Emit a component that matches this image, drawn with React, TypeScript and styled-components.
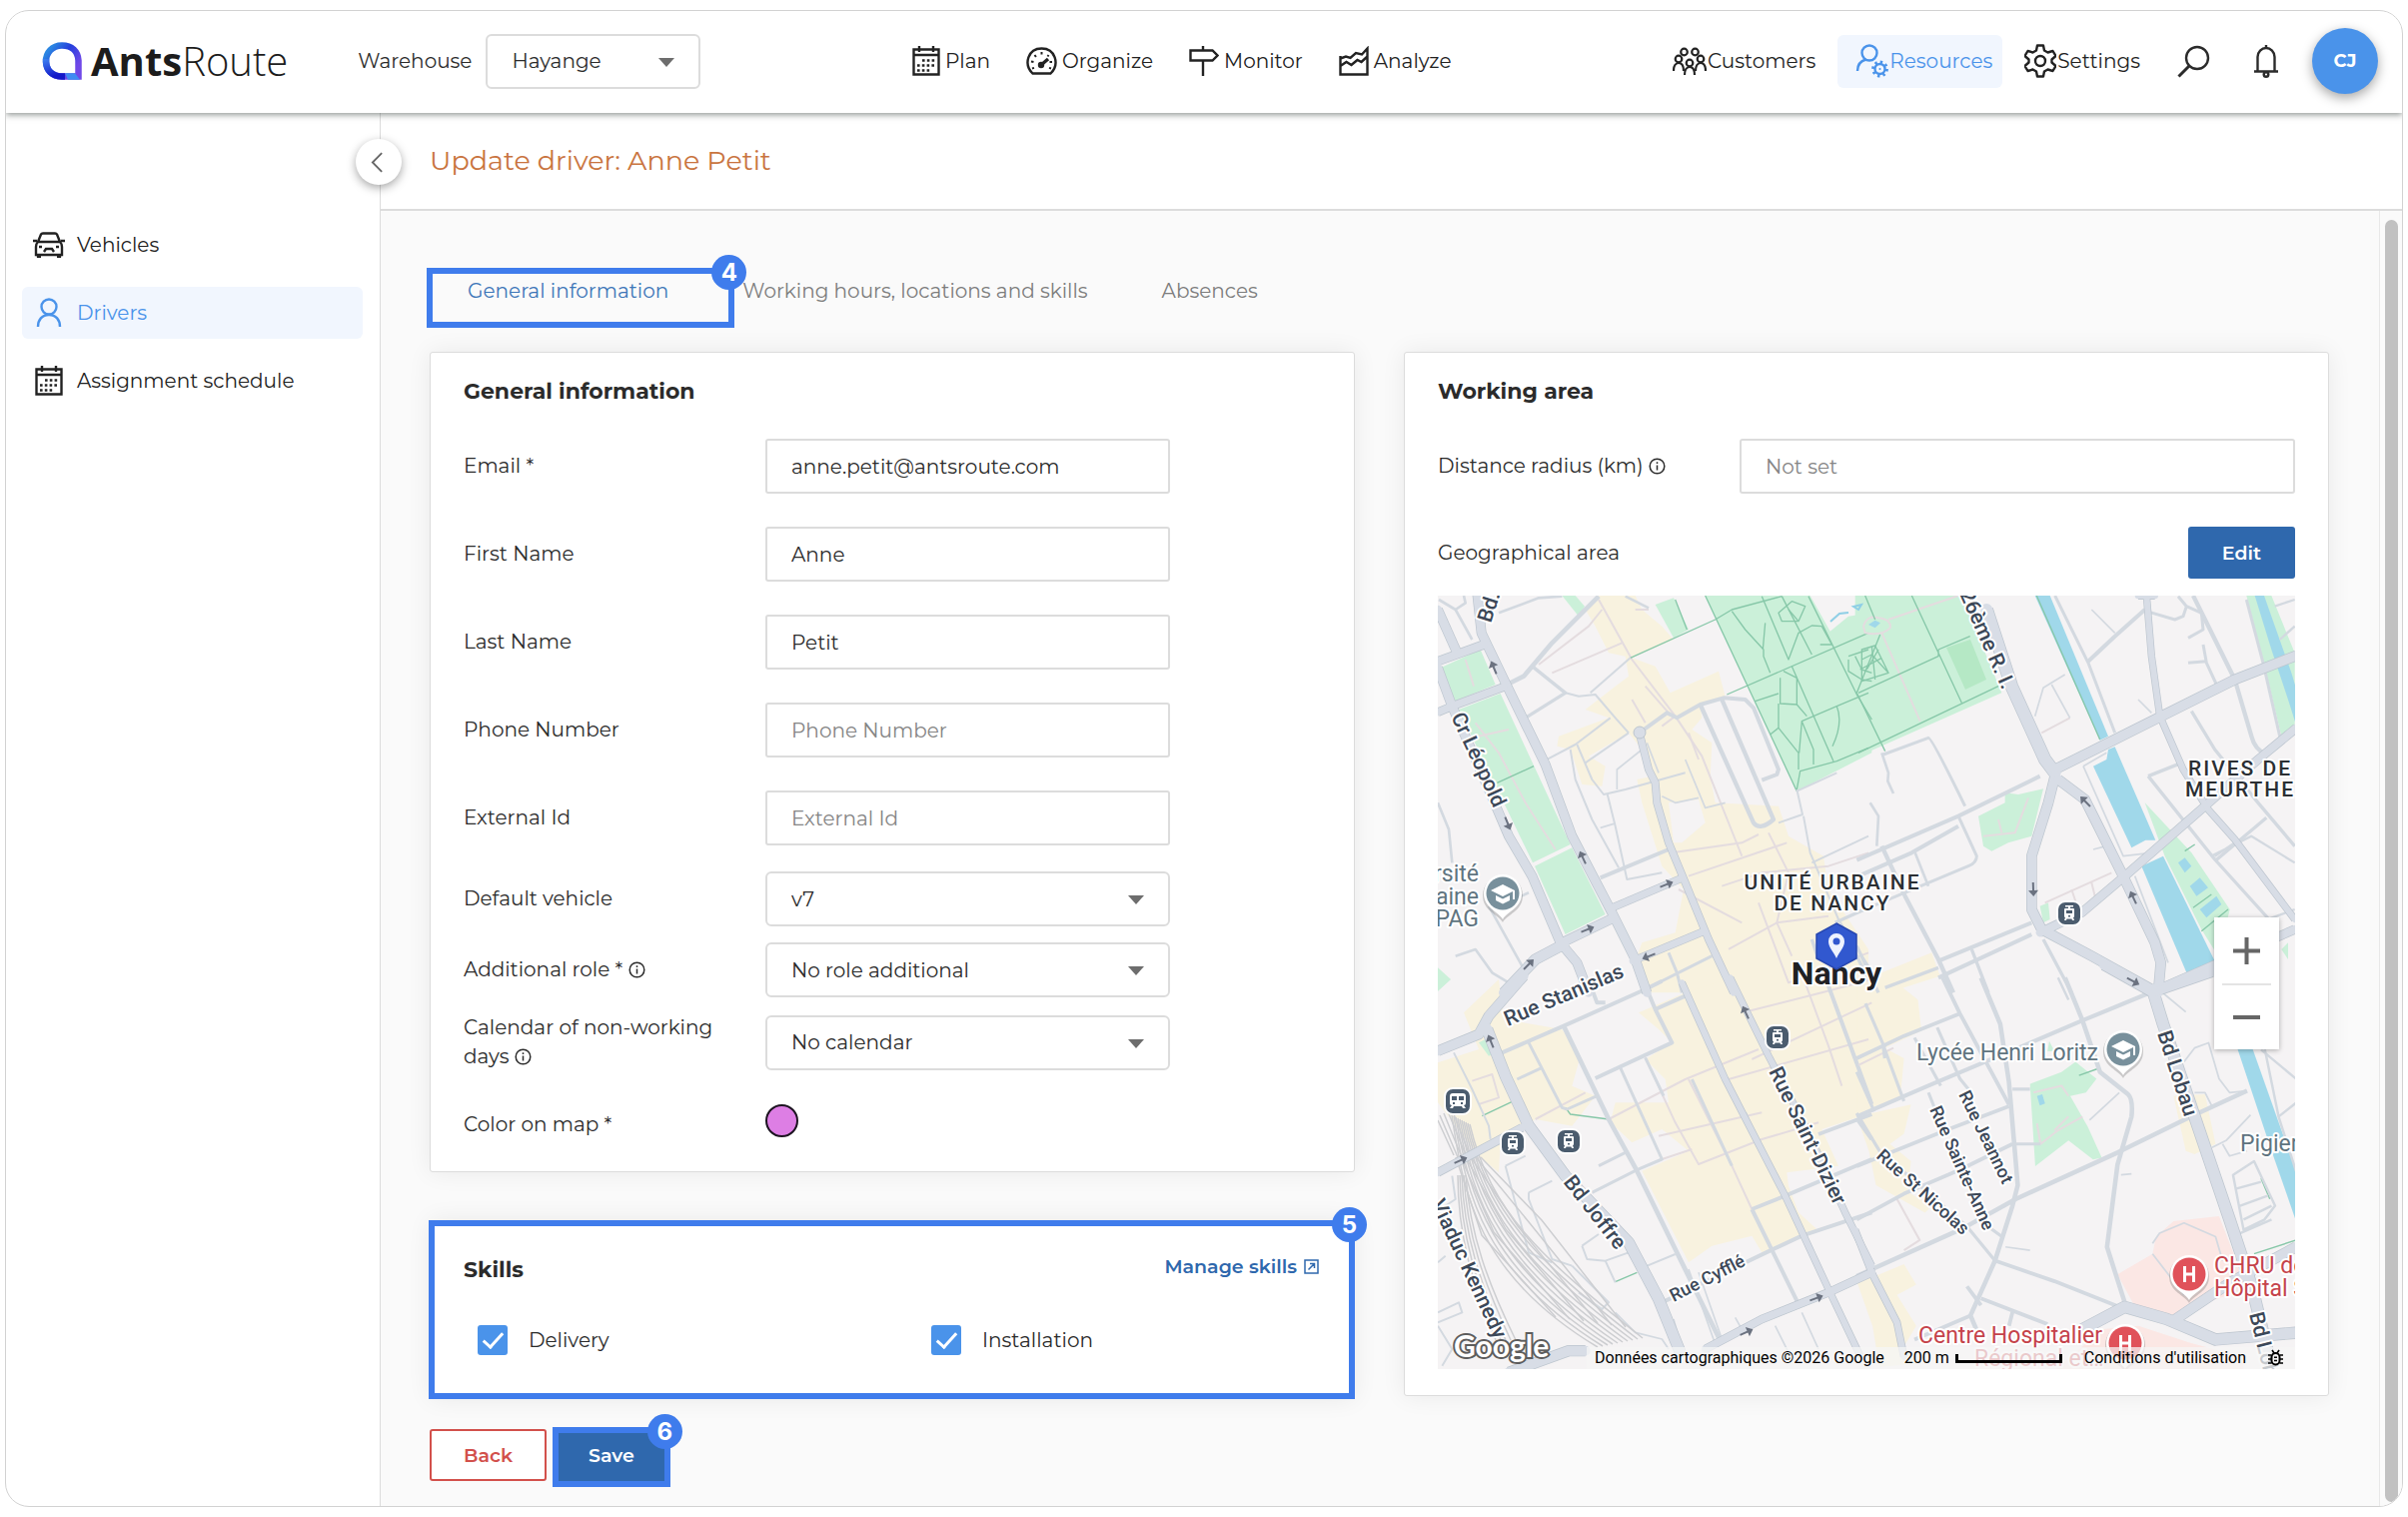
import React from "react";
import styled, { createGlobalStyle, css } from "styled-components";

const font = `Montserrat, Inter, "Open Sans", sans-serif`;
const mapFont = `Roboto, "Noto Sans", sans-serif`;
const c = {
  text: "#2b2b2b",
  muted: "#7d7d7d",
  line: "#dcdcdc",
  blue: "#2f68ad",
  sky: "#4a93ea",
  mark: "#3f7cec",
  red: "#d2504b",
};

const Global = createGlobalStyle`
  *, *::before, *::after { box-sizing: border-box; }
  body { margin: 0; background: #fff; color: ${c.text}; font-family: ${font}; font-size: 20px; line-height: 29px; }
  button, input, select { font-family: inherit; font-size: inherit; color: inherit; }
`;

/* ---------- shell ---------- */
const Page = styled.div`
  min-height: 100vh;
  padding: 10px 5px;
  display: flex;
`;
const Frame = styled.div`
  flex: 1;
  display: flex;
  flex-direction: column;
  border: 1px solid #d2d2d2;
  border-radius: 24px;
  overflow: hidden;
`;
const Header = styled.header`
  position: relative;
  z-index: 2;
  height: 102px;
  padding: 0 24px 2px 36px;
  display: flex;
  align-items: center;
  justify-content: space-between;
  background: #fff;
  box-shadow: 0 2px 6px rgba(40, 50, 45, 0.5);
`;
const Group = styled.div`
  display: flex;
  align-items: center;
`;
const Logo = styled.a`
  display: flex;
  align-items: center;
  gap: 9px;
  margin-right: 70px;
  color: #1c1c1c;
  text-decoration: none;
  font: 300 40px/48px "Open Sans", "Noto Sans", sans-serif;
`;
const LogoBold = styled.strong`
  font-weight: 700;
`;
const HeaderLabel = styled.label`
  margin-right: 14px;
`;
const SelectBox = styled.div<{ $w?: number }>`
  position: relative;
  width: ${(p) => (p.$w ? `${p.$w}px` : "100%")};
  &::after {
    content: "";
    position: absolute;
    right: 26px;
    top: 24px;
    border: 8px solid transparent;
    border-top: 9px solid #6d6d6d;
    border-bottom: 0;
    pointer-events: none;
  }
`;
const boxed = css`
  display: block;
  width: 100%;
  height: 55px;
  padding: 0 24px;
  background: #fff;
  border: 2px solid ${c.line};
  outline: none;
`;
const Select = styled.select`
  ${boxed}
  appearance: none;
  border-radius: 6px;
`;
const Input = styled.input`
  ${boxed}
  border-radius: 3px;
  &::placeholder {
    color: #858585;
    opacity: 1;
  }
`;
const Nav = styled.nav`
  display: flex;
  align-items: center;
  gap: 36px;
`;
const PlanNav = styled(Nav)`
  margin-right: 10px;
`;
const NavLink = styled.a<{ $active?: boolean }>`
  display: flex;
  align-items: center;
  gap: 5px;
  height: 53px;
  color: ${(p) => (p.$active ? c.sky : "#222")};
  text-decoration: none;
  ${(p) =>
    p.$active &&
    css`
      padding: 0 10px 0 18px;
      background: #f1f6fe;
      border-radius: 6px;
    `}
`;
const UserNav = styled(Nav)`
  gap: 22px;
  ${NavLink} {
    gap: 1px;
  }
`;
const IconButton = styled.button`
  display: grid;
  place-items: center;
  width: 36px;
  height: 40px;
  padding: 0;
  margin-left: 14px;
  border: 0;
  background: none;
`;
const Avatar = styled.button`
  width: 66px;
  height: 66px;
  margin-left: 6px;
  border: 0;
  border-radius: 50%;
  background: ${c.sky};
  color: #fff;
  font-size: 18px;
  font-weight: 700;
  box-shadow: 0 4px 12px rgba(0, 0, 0, 0.35);
`;

const Body = styled.div`
  flex: 1;
  display: flex;
`;
const Sidebar = styled.aside`
  position: relative;
  width: 375px;
  padding: 106px 17px 0 16px;
  border-right: 1px solid ${c.line};
`;
const SideNav = styled.nav`
  display: grid;
  gap: 16px;
`;
const SideLink = styled.a<{ $active?: boolean }>`
  display: flex;
  align-items: center;
  gap: 12px;
  height: 52px;
  padding-left: 11px;
  border-radius: 6px;
  color: ${(p) => (p.$active ? c.sky : "#222")};
  background: ${(p) => (p.$active ? "#f1f6fe" : "none")};
  text-decoration: none;
`;
const Collapse = styled.button`
  position: absolute;
  top: 26px;
  right: -22px;
  width: 46px;
  height: 46px;
  padding: 0 3px 0 0;
  display: grid;
  place-items: center;
  border: 0;
  border-radius: 50%;
  background: #fff;
  box-shadow: 0 3px 10px rgba(0, 0, 0, 0.35);
`;
const Main = styled.main`
  flex: 1;
  min-width: 0;
  display: flex;
  flex-direction: column;
`;
const TitleBar = styled.div`
  height: 98px;
  padding-left: 49px;
  display: flex;
  align-items: center;
  border-bottom: 2px solid ${c.line};
`;
const Title = styled.h1`
  margin: 0;
  color: #c9743f;
  font-size: 27px;
  line-height: 36px;
  font-weight: 400;
`;
const Scroller = styled.div`
  flex: 1;
  display: flex;
  background: #fafafa;
`;
const Content = styled.div`
  flex: 1;
  min-width: 0;
  padding: 58px 50px 22px 49px;
`;
const Track = styled.div`
  width: 23px;
  padding: 9px 4px 4px 5px;
  display: flex;
  border-left: 1px solid #e8e8e8;
`;
const Thumb = styled.div`
  flex: 1;
  border-radius: 7px;
  background: #c1c1c1;
`;

/* ---------- numbered highlights ---------- */
const Marked = styled.div`
  position: relative;
`;
const Outline = styled.span<{ $inset: string }>`
  position: absolute;
  inset: ${(p) => p.$inset};
  border: 6px solid ${c.mark};
  pointer-events: none;
`;
const Step = styled.span`
  position: absolute;
  top: -19px;
  right: -18px;
  width: 35px;
  height: 35px;
  display: grid;
  place-items: center;
  border-radius: 50%;
  background: ${c.mark};
  color: #fff;
  font: 700 24px/35px Inter, sans-serif;
`;

/* ---------- tabs, cards, fields ---------- */
const Tabs = styled.div`
  display: flex;
  margin: 0 0 39px 1px;
`;
const Tab = styled.button<{ $active?: boolean }>`
  height: 44px;
  padding: 0 37px;
  border: 0;
  background: none;
  color: ${(p) => (p.$active ? "#3d76b8" : c.muted)};
`;
const Columns = styled.div`
  display: grid;
  grid-template-columns: 1fr 1fr;
  gap: 49px;
  align-items: start;
`;
const Card = styled.section`
  padding: 23px 33px 32px;
  background: #fff;
  border: 1px solid ${c.line};
  border-radius: 3px;
  box-shadow: 0 0 24px rgba(0, 0, 0, 0.07);
`;
const AreaCard = styled(Card)`
  padding-bottom: 26px;
`;
const SkillCard = styled(Card)`
  margin-top: 48px;
  padding: 33px 33px 43px;
`;
const CardTitle = styled.h2`
  margin: 0;
  font-size: 22px;
  line-height: 32px;
  font-weight: 700;
`;
const Fields = styled.div<{ $top: number; $gap: number }>`
  display: grid;
  gap: ${(p) => p.$gap}px;
  margin-top: ${(p) => p.$top}px;
`;
const Row = styled.div<{ $wide?: boolean; $end?: boolean }>`
  display: grid;
  grid-template-columns: 302px ${(p) => (p.$wide ? "1fr" : "minmax(0, 405px)")};
  align-items: ${(p) => (p.$end ? "end" : "center")};
`;
const Label = styled.label`
  padding-right: 50px;
`;
const Swatch = styled.button`
  width: 33px;
  height: 33px;
  margin-bottom: 2px;
  border: 2px solid #1c1320;
  border-radius: 50%;
  background: #dd7ee4;
`;
const Between = styled.div`
  display: flex;
  justify-content: space-between;
  align-items: center;
`;
const GeoRow = styled(Between)`
  margin: 33px 0 17px;
`;
const ManageLink = styled.a`
  display: flex;
  align-items: center;
  gap: 7px;
  height: 24px;
  padding-right: 2px;
  align-self: flex-start;
  color: ${c.blue};
  font-size: 19px;
  font-weight: 600;
  text-decoration: none;
`;
const SkillGrid = styled.div`
  display: grid;
  grid-template-columns: 1fr 1fr;
  gap: 64px;
  margin-top: 39px;
  padding-left: 14px;
`;
const Skill = styled.label`
  display: flex;
  align-items: center;
  gap: 21px;
  height: 30px;
`;
const Check = styled.input`
  appearance: none;
  position: relative;
  width: 30px;
  height: 30px;
  margin: 0;
  border-radius: 3px;
  background: ${c.sky};
  &::after {
    content: "";
    position: absolute;
    left: 10px;
    top: 3px;
    width: 11px;
    height: 20px;
    border: solid #fff;
    border-width: 0 3px 3px 0;
    transform: rotate(42deg);
  }
`;
const Actions = styled.div`
  display: flex;
  gap: 8px;
  margin-top: 30px;
`;
const Button = styled.button<{ $kind: "solid" | "outline" }>`
  height: 52px;
  padding: 0 32px;
  border-radius: 3px;
  font-size: 19px;
  font-weight: 600;
  border: 2px solid ${(p) => (p.$kind === "solid" ? c.blue : c.red)};
  background: ${(p) => (p.$kind === "solid" ? c.blue : "#fff")};
  color: ${(p) => (p.$kind === "solid" ? "#fff" : c.red)};
`;

/* ---------- map ---------- */
const MapBox = styled.div`
  position: relative;
  overflow: hidden;
  font-family: ${mapFont};
`;
const MapSvg = styled.svg`
  display: block;
  width: 100%;
  height: auto;
  background: #f5f3f4;
`;
const Zoom = styled.div`
  position: absolute;
  right: 16px;
  bottom: 320px;
  width: 65px;
  background: #fff;
  box-shadow: 0 1px 5px rgba(0, 0, 0, 0.3);
`;
const ZoomButton = styled.button`
  display: grid;
  place-items: center;
  width: 49px;
  height: 66px;
  margin: 0 8px;
  padding: 0;
  border: 0;
  background: none;
  & + & {
    border-top: 2px solid #e4e4e4;
  }
`;
const Credits = styled.div`
  position: absolute;
  right: 0;
  bottom: 0;
  display: flex;
  align-items: center;
  height: 22px;
  padding: 0 11px 0 8px;
  background: rgba(245, 245, 245, 0.75);
  color: #000;
  font-size: 16px;
  line-height: 22px;
  white-space: nowrap;
`;
const Scale = styled.span`
  width: 107px;
  height: 9px;
  margin: 0 22px 0 6px;
  border: 3px solid #000;
  border-top: 0;
`;
const Distance = styled.span`
  margin-left: 20px;
`;
const Terms = styled.a`
  color: #000;
  text-decoration: none;
  margin-right: 21px;
`;

const stroke = { fill: "none", stroke: "currentColor", strokeWidth: 2.4 } as const;

const CalendarIcon = () => (
  <svg width="28" height="30" viewBox="0 0 28 30" {...stroke}>
    <path d="M1.500 3.500h25v25h-25zM1.500 9h25M7 0v6M21 0v6" />
    <path d="M10 14.500h14M5 19.500h19M5 24.500h13" strokeDasharray="2.600 2.200" strokeWidth="2.600" />
  </svg>
);
const GaugeIcon = () => (
  <svg width="31" height="28" viewBox="0 0 31 28" {...stroke}>
    <path d="M6.500 26.500C-3 17 2 1.500 15.500 1.500S34 17 24.500 26.500z" />
    <path d="M15 18l7-6" strokeWidth="3.400" />
    <circle cx="15" cy="18" r="2" fill="currentColor" />
    <path d="M15.500 5v2.500M8.500 8l1.400 2M5 14.500l2.500.5M6 21.500l2-.6M22.500 8l-1 1.500M26 15h-2.500M25 21.500l-2-.6" strokeWidth="2" />
  </svg>
);
const SignIcon = () => (
  <svg width="30" height="30" viewBox="0 0 30 30" {...stroke}>
    <path d="M1.500 4.500h22l5 5-5 5h-22zM14 0v4M14 14v16" />
  </svg>
);
const AreaIcon = () => (
  <svg width="30" height="30" viewBox="0 0 30 30" {...stroke}>
    <path d="M1.500 10V28.500h27V2.500L23 8.500l-6-1.500-5.500 5L7 10.500 1.500 12.500M1.500 20l6-4 5 3 6-5 4 2 6-5.500" />
  </svg>
);
const Person = ({ x, y }: { x: number; y: number }) => (
  <g transform={`translate(${x} ${y})`}>
    <circle cx="0" cy="0" r="3.300" />
    <path d="M-5 12c0-5 2-8 5-8s5 3 5 8" />
  </g>
);
const CustomersIcon = () => (
  <svg width="34" height="28" viewBox="0 0 34 28" {...stroke} strokeWidth={2.2}>
    <circle cx="11.500" cy="5" r="3.300" />
    <circle cx="22.500" cy="5" r="3.300" />
    <Person x={6} y={12} />
    <Person x={28} y={12} />
    <Person x={17} y={16} />
  </svg>
);
const ResourcesIcon = () => (
  <svg width="33" height="34" viewBox="0 0 33 34" {...stroke}>
    <circle cx="14" cy="9" r="7.500" />
    <path d="M2 27c0-6 3-10 8.500-11.500" />
    <circle cx="24.500" cy="25" r="5" />
    <circle cx="24.500" cy="25" r="7" strokeDasharray="2.400 3.100" strokeWidth="2.800" />
    <circle cx="24.500" cy="25" r="1" fill="currentColor" stroke="none" />
  </svg>
);
const GearIcon = () => (
  <svg width="32" height="34" viewBox="0 0 32 34" {...stroke} strokeLinejoin="round">
    <path d="M13 1.500h6l1 5 3.500 2L28.500 7l3 5-4 3.500v3l4 3.500-3 5-5-1.500-3.500 2-1 5h-6l-1-5-3.500-2-5 1.500-3-5 4-3.500v-3l-4-3.500 3-5 5 1.500 3.500-2z" />
    <circle cx="16" cy="17" r="5" />
  </svg>
);
const SearchIcon = () => (
  <svg width="33" height="33" viewBox="0 0 33 33" {...stroke}>
    <circle cx="20" cy="13" r="11" />
    <path d="M12.500 20.500L1.500 31.500" strokeWidth="3" />
  </svg>
);
const BellIcon = () => (
  <svg width="26" height="33" viewBox="0 0 26 33" {...stroke}>
    <path d="M4.500 26V12c0-5 4-9 8.500-9s8.500 4 8.500 9v14M1 26.500h24M13 0v3" />
    <circle cx="13" cy="29.500" r="2.300" />
  </svg>
);
const CarIcon = () => (
  <svg width="32" height="26" viewBox="0 0 32 26" {...stroke}>
    <path d="M5 10l3-7.500Q8.500 1.500 10 1.500h12q1.500 0 2 1L27 10M0 9h4M28 9h4M5 10h22q2 2 2 5v8H3v-8q0-3 2-5zM5 23v2.500M27 23v2.500M4 25h4M24 25h4" />
    <path d="M6 15h3M23 15h3M11 20l2-3h6l2 3" />
  </svg>
);
const DriverIcon = () => (
  <svg width="32" height="30" viewBox="0 0 32 30" {...stroke}>
    <circle cx="16" cy="9" r="7.500" />
    <path d="M5 29c0-7 4-12 11-12s11 5 11 12" />
  </svg>
);
const InfoSvg = styled.svg`
  vertical-align: -2px;
`;
const InfoIcon = () => (
  <InfoSvg width="17" height="17" viewBox="0 0 17 17" fill="none" stroke="currentColor" strokeWidth="1.500">
    <circle cx="8.500" cy="8.500" r="7.300" />
    <path d="M8.500 7.500v5M8.500 4.300v1.600" />
  </InfoSvg>
);
const ExternalIcon = () => (
  <svg width="15" height="15" viewBox="0 0 15 15" fill="none" stroke="currentColor" strokeWidth="1.500">
    <path d="M1 1h13v13H1zM4.500 10.500L10 5M6 4.500h4.500V9" />
  </svg>
);
const LogoMark = () => (
  <svg width="40" height="39" viewBox="0 0 40 39">
    <defs>
      <linearGradient id="brand" x1="0.200" y1="0" x2="1" y2="0.600">
        <stop offset="0" stopColor="#2b86e2" />
        <stop offset="0.450" stopColor="#2440dc" />
        <stop offset="1" stopColor="#7048e8" />
      </linearGradient>
      <linearGradient id="brandSide" x1="0" y1="0" x2="0.400" y2="1">
        <stop offset="0" stopColor="#3a7df0" />
        <stop offset="1" stopColor="#1418c8" />
      </linearGradient>
    </defs>
    <path d="M20 3.500c10 0 16 6 16.500 15V34.500H20C10 34.500 4 28 4 19.500S10 3.500 20 3.500z" fill="none" stroke="url(#brand)" strokeWidth="6.500" />
    <path d="M4 17C3.500 28 10 34.500 20 34.500h3" fill="none" stroke="url(#brandSide)" strokeWidth="6.500" />
    <path d="M23 31.300h10L38 37.700H26z" fill="#3f8bf2" />
  </svg>
);

/* Map data: four quadrants, each drawn in its own unit grid. */
type Road = [d: string, width: number];
type Quad = {
  at: string;
  shops: string[];
  parks: string[];
  water?: string[];
  clinic?: string[];
  land?: string[];
  lanes: string[];
  minor: Road[];
  major: Road[];
  trails?: string[];
};

const quads: Quad[] = [
  {
    at: "translate(-9 -6) scale(.33333)",
    shops: [
      "470,60 510,18 620,18 640,60 700,110 735,150 610,205 680,230 725,310 870,245 890,320 815,345 820,385 790,420 850,460 845,560 860,640 1050,650 1080,740 1185,800 1200,900 1320,1080 1320,1210 915,1210 835,1025 625,1100 640,1060 740,1030 765,900 700,830 640,640 625,570 670,560 640,480 600,430 480,500 530,530 520,590 460,585 425,480 385,470 390,440 540,385 470,360 560,290 600,260 590,200 540,190 500,110",
      "630,1115 830,1030 920,1210 640,1210",
    ],
    parks: [
      "35,235 155,180 200,285 78,335",
      "90,360 215,312 425,765 312,820",
      "318,830 430,775 530,975 410,1035",
      "830,18 1330,18 1330,490 1105,605",
      "680,45 735,25 780,120 735,145",
      "400,18 440,18 468,50 450,80",
      "27,1135 66,1170 27,1205",
    ],
    land: ["1145,18 1290,18 1330,70 1260,80 1205,125", "720,640 810,630 830,700 760,760 735,760", "560,965 750,900 740,1000 640,1050 600,1060"],
    lanes: [
      "M510,30 610,210 740,380 820,500 920,750 940,800",
      "M730,790 940,760 990,735M780,860 1075,760M650,290 720,370M610,330 650,400M740,380 700,410M780,430 810,510",
      "M580,160 370,250M330,225 480,110 520,60M620,60 660,60M1020,730 1080,850 1045,1000 1090,1100",
      "M750,900 940,1000M880,890 1000,850 1200,830 1320,790M900,1080 1045,1000 1200,980M990,940 1080,1180 1320,1090",
      "M110,210 135,290M150,440 240,420M140,400 210,490 290,640 380,780",
    ],
    minor: [
      ["M632,430 715,370 745,385 815,345 885,325 950,330 975,355 1050,540 1045,555 1000,572", 12],
      ["M815,345 975,700Q995,725 1035,690L880,330", 13],
      ["M235,285 285,260 370,160 510,20", 14],
      ["M310,230 410,310 290,385", 10],
      ["M485,310 605,205M410,310 450,320 500,315 560,385 600,430M345,515 440,465 545,385M470,520 600,430", 6],
      ["M445,465 490,570 525,615 590,600 770,550M425,480 440,570 490,690 570,835M535,610 560,710 595,870 700,850", 6],
      ["M515,715 555,703M565,600 565,540 640,480M655,460 690,550M700,620 740,640 810,625M770,510 830,655 890,640", 5],
      ["M515,865 720,780", 12],
      ["M80,1100 140,1080 190,1150 240,1180M180,950 280,1130M27,640 60,720 70,820M190,960 300,910", 8],
      ["M1050,700 1122,675 1105,600M1125,680 1145,790 1230,990 1320,1130M1150,820 1320,740", 6],
      ["M720,1090 745,1150 760,1210M650,1200 850,1100", 9],
      ["M80,60 130,150M30,30 80,60 110,40 105,18M210,70 330,25 400,20M590,20 660,55", 8],
      ["M1220,1000 1330,950M1150,1050 1170,1110M1270,1070 1320,1170", 10],
      ["M1105,605 1225,550", 6],
    ],
    major: [
      ["M145,10 158,130 235,290 350,525 430,740 550,970 620,1110 655,1210", 26],
      ["M27,235 70,350 180,600 240,740 310,860 395,1060 445,1120 480,1210", 26],
      ["M27,60 85,190", 26],
      ["M27,215 165,165", 24],
      ["M27,368 70,350 225,292", 22],
      ["M400,1060 545,990", 26],
      ["M550,955 755,868", 20],
      ["M612,1115 828,1025", 20],
      ["M405,1065 320,1110 225,1210", 30],
      ["M632,430 660,540 680,580 685,640 720,760 770,880 840,1050 915,1210", 20],
    ],
    trails: [
      "M605,205 860,90 910,60 1060,20M895,315 1320,130M830,18 1105,605M1105,600 1115,545 1225,515 1320,475",
      "M910,65 950,120 1005,180 1005,200 1025,250M1010,100 1003,180M1000,20 1080,210 1110,130 1150,108 1180,110M1060,20 1150,195M1090,230 1215,515M1140,20 1285,315 1330,390",
      "M1050,70 1090,35 1130,50 1110,95 1060,95zM1080,60 1110,95M1180,110 1210,165 1175,165M1065,245 1105,265 1105,345 1055,342 1055,265M1050,342 1050,415 1110,490 1110,540M980,335 1050,312M1320,310 1225,350 1120,395 1155,480 1155,525M1225,350Q1245,400 1212,470M1105,345 1135,380M1025,435 1050,415M1120,395 1112,490",
      "M205,580 315,530M1260,200 1320,180M1260,210 1260,245 1300,270 1330,275M1280,200 1300,240 1330,250M740,30 775,120",
    ],
  },
  {
    at: "translate(421 -6) scale(.33333)",
    shops: ["70,1150 220,1090 245,1160 90,1210 60,1210"],
    parks: [
      "-10,18 310,18 430,310 -10,505",
      "360,680 440,640 440,610 480,615 555,598 520,740 450,760 400,785 375,770",
      "1165,18 1240,18 1310,190 1310,430 1270,440 1220,230",
      "860,640 1000,790 1115,960 1080,1100 1030,1020 920,800",
      "1270,1080 1290,1060 1290,1110",
      "545,950 570,940 575,990 555,1000",
    ],
    water: [
      "530,18 575,18 750,440 725,452",
      "750,480 770,472 892,752 862,752 820,775 705,530 745,510",
      "850,830 915,800 1070,1115 985,1150",
      "1190,18 1218,18 1300,250 1312,290 1312,400 1290,330 1240,180",
      "960,820 980,805 1000,830 980,850",
      "995,890 1025,865 1050,895 1015,920",
      "1025,960 1075,920 1090,945 1045,985",
      "30,105 50,92 66,100 50,115",
    ],
    lanes: [
      "M15,110Q25,75 60,85Q100,90 95,115 70,140 20,130zM90,90 300,18M70,130 185,395",
      "M375,740 470,730 510,625M420,690 430,730M560,940 760,850M640,900 660,960M700,880 710,920M550,430 635,385",
    ],
    minor: [
      ["M690,215 770,140 860,60", 12],
      ["M590,18 690,220 770,430", 9],
      ["M1005,18 1130,270 1180,440Q1190,480 1225,495", 13],
      ["M865,65 950,90 975,80 985,50 1030,70 1035,120 990,145M985,50 960,20M1035,165 1045,220 1075,285M990,220 1045,215", 9],
      ["M-5,812 300,680 545,560M-5,862 160,790 300,710", 12],
      ["M70,770 140,920 240,1110 285,1210", 13],
      ["M75,495 210,445Q220,445 320,650M300,680 355,800Q355,820 330,830L-5,970", 9],
      ["M170,790 210,890M70,490 90,550 88,575 105,612M35,640 60,680 55,770", 8],
      ["M240,1115 520,1000M240,1165 520,1035", 12],
      ["M-5,1070 60,1210M340,1080 390,1210M555,1050 640,1210M80,1195 240,1135", 10],
      ["M530,380 555,295 620,255M580,285 635,385M700,60 770,130M840,330 880,370", 5],
      ["M870,560 970,520M870,560 1070,810 1260,1020M1070,815 1225,685M1000,365 1070,480 1200,640 1310,770", 10],
      ["M1060,800 1180,740 1310,820M1130,760 1070,800M1310,960 1200,1000M1250,50 1310,30M1265,150 1310,110", 7],
      ["M675,530 745,490M675,530 795,800 880,790M830,860 930,1120M705,780 735,772", 5],
      ["M1165,30 1215,220 1265,440", 9],
    ],
    major: [
      ["M385,60 460,290 560,510 590,550", 36],
      ["M590,540 900,385 1130,270 1315,198", 28],
      ["M590,560 570,640 520,800 520,960 550,1020 700,1100 880,1200", 28],
      ["M600,570 680,630 710,690 790,850 890,1060 908,1120 900,1210", 28],
      ["M545,1030 670,970 800,860 1040,650 1200,510 1315,415", 24],
      ["M865,18 880,200 905,380 975,540 1050,660 1130,750 1310,990", 18],
      ["M840,18 890,18", 20],
      ["M900,1200 1060,1130 1310,1020", 24],
    ],
    trails: [
      "M535,18 725,450M20,18 50,90M160,18 310,340M65,135 -5,310M240,180 335,140M240,180 240,200 0,310M420,290 0,490M-5,310 80,485",
      "M10,180 50,168 90,250 10,275zM10,210 40,195 90,250M40,170 50,270M5,240 70,205M60,180 25,240M980,785 1010,765M1005,955 1060,915M1030,1025 1110,960",
    ],
  },
  {
    at: "translate(-9 384) scale(.33333)",
    shops: [
      "770,40 905,-5 1330,-5 1330,400 1180,450 1230,560 1075,580 1080,620 1110,700 1165,750 1040,805 1000,820 970,770 850,800 780,850 640,575 780,515 700,450 610,490 545,430 560,370 720,370 710,300 650,240 730,190 690,150 630,100",
      "105,100 210,0 225,120 400,150 455,230 430,320 500,350 430,440 320,420 290,440 215,490 210,580 150,530 27,370 27,250 150,210",
    ],
    parks: ["150,190 180,175 200,220 180,230", "27,0 65,0 27,35"],
    lanes: [
      "M130,305 190,285 210,355 150,375M960,95 1180,40 1330,0M970,240 1330,70M900,300 1320,180M540,420 770,300 990,210M690,470 1000,400",
      "M650,235 740,430 810,555 1000,480 1170,430M1130,10 1200,200 1240,320M780,300 910,560 970,690M700,540 790,510M320,420 470,340",
    ],
    minor: [
      ["M640,-5 680,90 730,190 500,297", 12],
      ["M405,140 540,420 625,575 740,810 880,1095", 14],
      ["M220,220 405,140 650,30 700,5M490,30 505,70 530,70M680,90 770,50", 12],
      ["M300,190 400,385 415,390 505,350M265,300 340,265", 9],
      ["M575,265 700,540 625,572 490,640M510,560 590,520M650,235 705,350M790,300 910,560", 9],
      ["M970,690 1070,650 1330,540M970,690 1110,975M700,970 1030,812 1120,770 1330,700", 12],
      ["M1170,465 1330,405M1290,425 1330,480M1200,20 1330,375", 12],
      ["M650,862 740,825M460,800 510,765M460,800 475,840 530,845 600,820M430,860 540,970 520,990 450,940M530,845 560,910", 6],
      ["M300,640 370,605M300,640 300,660 370,840 430,860M230,560 300,820 370,850M75,220 130,330 180,440 185,480M230,560 290,530", 6],
      ["M27,1040 70,1110 40,1160M27,850 50,830M27,695 80,660 70,590M27,1030 100,1000 90,970 27,1000", 6],
      ["M780,870 860,1095M810,880 880,1080M1040,1040 1080,1120M1120,1000 1170,1110M920,1015 945,1060M735,1020 760,1110", 5],
      ["M950,400 1010,540", 9],
      ["M560,1000 620,1060 700,1080 720,1110", 5],
    ],
    major: [
      ["M27,215 150,165 180,110 285,-10", 28],
      ["M175,150 230,290 300,440 410,590 600,790 690,960 755,1120", 32],
      ["M27,580 280,445", 22],
      ["M905,-5 1020,230 1130,440 1250,700 1330,860", 18],
      ["M760,10 890,300 1070,650 1200,930 1295,1130", 18],
      ["M830,1110 1000,1020 1200,940 1330,880", 22],
      ["M240,1180 420,1115 470,1115", 30],
    ],
    trails: ["M160,410 255,365M410,385 425,405 540,420M560,908 625,880"],
  },
  {
    at: "translate(421 384) scale(.3504 .3433)",
    shops: [
      "-5,-5 90,-5 170,60 180,150 75,200 130,230 120,340 40,380 -5,395",
      "-5,400 150,365 130,450 90,480 150,530 140,620 210,660 190,680 50,600 30,500",
      "900,340 990,335 1020,480 960,510 935,500",
      "60,860 130,830 165,890 110,920 165,1010 130,1070 170,1120 60,1130 40,1010 -5,880",
    ],
    parks: ["490,305 580,270 620,240 680,290 650,330 605,340 655,430 695,520 670,525 600,470 505,545", "545,180 560,210 540,210"],
    water: ["1082,200 1125,200 1250,560 1250,705 1180,500", "510,340 525,335 533,362 518,368"],
    clinic: ["740,860 840,800 850,750 900,705 1030,690 1110,900 920,970 870,985 790,955", "690,1020 800,1010 950,1060 1100,1100 1100,1140 560,1140 640,1070"],
    lanes: ["M500,330 580,310 600,340M510,420 520,480 570,440 640,400M0,250 100,200M110,640 175,760 130,790M560,440 600,400"],
    minor: [
      ["M-5,400 200,310 480,190 640,120 830,40", 12],
      ["M-5,545 250,440 430,370M-5,700 130,625 290,555 440,480", 11],
      ["M-5,865 300,725 450,640 740,505 950,400 1110,325", 13],
      ["M240,-5 290,100 430,365M-5,230 130,165 290,100", 11],
      ["M350,-5 405,130 430,300 455,600 440,660 390,820 320,980 345,1040", 13],
      ["M590,-5 640,120 690,270 770,335Q785,350 780,400L740,540 710,780 760,940", 13],
      ["M390,820 560,880 745,955M350,930 540,1005M440,970 430,1010M310,895 350,950M320,980 160,1050", 11],
      ["M310,720 390,820M370,720 410,750M-5,390 60,500 310,720", 9],
      ["M-5,270 45,385M70,190 130,355M160,170 235,310M225,140 290,290 330,340M20,70 75,200M200,330 235,420M440,320 490,320M450,480 520,480M70,190 75,230", 9],
      ["M745,330 660,410M750,570 780,567M420,780 490,790M870,40 935,95M840,770 860,740 930,710 1020,750 1040,820M840,800 930,920", 5],
      ["M930,240 960,200 1000,185 1030,290 1060,330 1110,325M960,330 990,330 1010,370M1120,395 1050,470 1010,490M1040,480 1060,515 1110,500", 5],
      ["M1070,570 1130,530 1190,660 1160,700 1100,730zM1080,610 1150,590M1090,660 1170,630M1100,700 1180,660M1090,740 1180,700", 7],
      ["M1150,205 1250,290M1160,200 1200,400 1250,560M1200,400 1250,360M600,60 570,-5", 7],
    ],
    major: [
      ["M-10,730 40,860 110,1000 130,1100", 18],
      ["M840,30 870,130 960,400 1060,700 1125,900 1175,1110", 32],
      ["M640,1020 760,955 880,990 1020,1050 1250,1030", 32],
      ["M900,995 1060,885 1250,780", 28],
      ["M700,-40 840,40 1010,-20", 24],
    ],
    trails: ["M630,280 685,260M1130,800 1250,760M1150,580 1175,640"],
  },
];

/* Railway yard south of the station, fanning out from one throat. */
const rails = Array.from({ length: 10 }, (_, i) => {
  const k = i * 14;
  return `M${14 + i * 2},${520 + i} C${26 + i * 3},${600 + i * 2} ${40 + k * 0.5},${680 - i * 2} ${160 + i * 5},${752 - i}`;
});
const spurs = Array.from({ length: 5 }, (_, i) => `M${20 + i * 2},${580} C${20 + i * 3},${640} ${35 + i * 4},${690} ${58 + i * 5},${745}`);
const yard = Array.from({ length: 6 }, (_, i) => `M${18 + i * 5},${562} L${44 + i * 12},${640 - i * 3} L${118 + i * 14},${722 + i * 2}`);

type MapLabel = { t: string; x: number; y: number; r?: number; s?: number; kind?: "street" | "place" | "poi" | "health" | "city"; anchor?: "start" | "middle" | "end" };
const labels: MapLabel[] = [
  { t: "Bd.", x: 53, y: 28, r: -72 },
  { t: "Cr Léopold", x: 13, y: 121, r: 65 },
  { t: "Rue Stanislas", x: 70, y: 431, r: -23 },
  { t: "26ème R. I.", x: 522, y: -2, r: 66 },
  { t: "Rue Saint-Dizier", x: 331, y: 476, r: 64 },
  { t: "Bd Joffre", x: 125, y: 587, r: 52 },
  { t: "Rue Cyfflé", x: 236, y: 707, r: -27, s: 18 },
  { t: "Viaduc Kennedy", x: -7, y: 608, r: 65 },
  { t: "Rue Jeannot", x: 521, y: 499, r: 64, s: 18 },
  { t: "Rue Sainte-Anne", x: 492, y: 514, r: 66, s: 18 },
  { t: "Rue St Nicolas", x: 438, y: 562, r: 42, s: 18 },
  { t: "Bd Lobau", x: 720, y: 438, r: 72 },
  { t: "Bd Lobau", x: 812, y: 719, r: 76 },
  { t: "UNITÉ URBAINE", x: 395, y: 294, kind: "place", anchor: "middle" },
  { t: "DE NANCY", x: 395, y: 315, kind: "place", anchor: "middle" },
  { t: "RIVES DE", x: 751, y: 180, kind: "place" },
  { t: "MEURTHE", x: 748, y: 201, kind: "place" },
  { t: "Lycée Henri Loritz", x: 479, y: 465, kind: "poi" },
  { t: "Pigier", x: 803, y: 556, kind: "poi" },
  { t: "rsité", x: 41, y: 286, kind: "poi", anchor: "end" },
  { t: "aine", x: 41, y: 309, kind: "poi", anchor: "end" },
  { t: "PAG", x: 41, y: 331, kind: "poi", anchor: "end" },
  { t: "CHRU de", x: 777, y: 678, kind: "health" },
  { t: "Hôpital S", x: 777, y: 701, kind: "health" },
  { t: "Centre Hospitalier", x: 481, y: 748, kind: "health" },
  { t: "Régional et…", x: 537, y: 771, kind: "health" },
];
const tone = {
  street: ["#3c4858", 21, 500],
  place: ["#2b2f33", 21, 500],
  poi: ["#607480", 23, 400],
  health: ["#c5434b", 23, 400],
  city: ["#202124", 32, 700],
} as const;

const MapText = styled.text<{ $tracked?: boolean }>`
  font-family: ${mapFont};
  paint-order: stroke;
  stroke: #fff;
  stroke-width: 4px;
  stroke-linejoin: round;
  letter-spacing: ${(p) => (p.$tracked ? "2px" : "normal")};
`;
const PlaceName = ({ t, x, y, r = 0, s, kind = "street", anchor = "start" }: MapLabel) => {
  const [fill, size, weight] = tone[kind];
  return (
    <MapText $tracked={kind === "place"} transform={`translate(${x} ${y}) rotate(${r})`} fill={fill} fontSize={s ?? size} fontWeight={weight} textAnchor={anchor}>
      {t}
    </MapText>
  );
};

const Pin = ({ x, y, color, children }: { x: number; y: number; color: string; children: React.ReactNode }) => (
  <g transform={`translate(${x} ${y})`}>
    <path d="M0 27C-4 19-20 16-20 0a20 20 0 0 1 40 0C20 16 4 19 0 27z" fill="#777" opacity=".35" transform="translate(0 2)" />
    <path d="M0 26C-4 18-19 15-19 0a19 19 0 0 1 38 0C19 15 4 18 0 26z" fill="#fff" />
    <circle r="16.500" fill={color} />
    {children}
  </g>
);
const School = () => (
  <g fill="#fff">
    <path d="M0-9L12-3 0 3-12-3zM-7 2l7 3.500L7 2v5L0 10.500-7 7z" />
    <path d="M10-3h2v9h-2z" />
  </g>
);
const Hospital = () => <path d="M-6-8h3v6.500h6V-8h3V8H3V1.500h-6V8h-3z" fill="#fff" />;
const Tram = ({ x, y }: { x: number; y: number }) => (
  <g transform={`translate(${x} ${y})`}>
    <rect x="-12" y="-12" width="24" height="24" rx="8" fill="#4b5c6e" stroke="#fff" strokeWidth="2" />
    <path d="M-4-8h8v1.500h-3V-5h3q1 0 1 1v7q0 1-1 1l1 3H3L2.500 5.500h-5L-3 7h-2l1-3q-1 0-1-1v-7q0-1 1-1h3v-1.500h-3z" fill="#fff" />
    <path d="M-3-3h6v3h-6zM-1 2h2v1.500h-2z" fill="#4b5c6e" />
  </g>
);
const Train = ({ x, y }: { x: number; y: number }) => (
  <g transform={`translate(${x} ${y})`}>
    <rect x="-13" y="-13" width="26" height="26" rx="8" fill="#4b5c6e" stroke="#fff" strokeWidth="2" />
    <path d="M-5-8H5q3 0 3 3v7q0 2-2 2l2 3H5L4 5h-8l-1 2h-3l2-3q-2 0-2-2v-7q0-3 3-3z" fill="#fff" />
    <path d="M-6-5h5v4h-5zM1-5h5v4H1zM-5 1h2v2h-2zM3 1h2v2H3z" fill="#4b5c6e" />
  </g>
);
const arrows: [number, number, number][] = [
  [56, 72, -112], [70, 228, 68], [145, 262, -115], [229, 289, -22], [150, 334, -22], [91, 369, -45], [211, 361, 158],
  [596, 294, 88], [648, 206, -135], [696, 302, -115], [696, 386, 28], [53, 446, -112], [308, 417, -115], [23, 565, -24], [309, 737, -24], [379, 703, -20],
];

const NancyMap = () => (
  <MapSvg viewBox="0 0 858 774" role="img" aria-label="Map of Nancy">
    {quads.map((q, i) => (
      <g key={i} transform={q.at}>
        {q.shops.map((p) => <polygon key={p} points={p} fill="#f8f2df" />)}
        {q.clinic?.map((p) => <polygon key={p} points={p} fill="#fbe7e4" />)}
        {q.parks.map((p) => <polygon key={p} points={p} fill="#cbf0d9" />)}
        {q.land?.map((p) => <polygon key={p} points={p} fill="#f5f3f4" />)}
        {q.water?.map((p) => <polygon key={p} points={p} fill="#a0d8ea" />)}
      </g>
    ))}
    <polygon points="509,52 533,44 549,84 528,94" fill="#b5e8c5" />
    <path d="M393,26l9-8 9-1M416,11l8-2-3 5z" fill="none" stroke="#8fcfe6" strokeWidth="2" />
    {quads.map((q, i) => (
      <g key={i} transform={q.at} fill="none" strokeLinejoin="round">
        {q.lanes.map((d) => <path key={d} d={d} stroke="#e4dcdf" strokeWidth="6" />)}
        {q.trails?.map((d) => <path key={d} d={d} stroke="#86c7a8" strokeWidth="4" />)}
        {q.minor.map(([d, w]) => <path key={d} d={d} stroke="#d3d9e0" strokeWidth={w} />)}
      </g>
    ))}
    <g fill="none" stroke="#cdced1" strokeWidth="1.500">
      {[...rails, ...spurs, ...yard].map((d) => <path key={d} d={d} />)}
      <path d="M0,525 16,560M2,520 20,562M6,518 24,562M10,516 28,560M14,514 32,560" />
    </g>
    {quads.map((q, i) => (
      <g key={i} transform={q.at} fill="none" strokeLinejoin="round">
        {q.major.map(([d, w]) => <path key={d} d={d} stroke="#bcc5ce" strokeWidth={w + 4} />)}
      </g>
    ))}
    {quads.map((q, i) => (
      <g key={i} transform={q.at} fill="none" strokeLinejoin="round" strokeLinecap="round">
        {q.major.map(([d, w]) => <path key={d} d={d} stroke="#d8dde6" strokeWidth={w} />)}
      </g>
    ))}
    <circle cx="202" cy="137" r="6" fill="#d8dde6" stroke="#bcc5ce" />
    {arrows.map(([x, y, r]) => (
      <path key={`${x}-${y}`} transform={`translate(${x} ${y}) rotate(${r})`} d="M-7-1H1v-4l6 5-6 5V1h-8z" fill="#6b7280" />
    ))}
    {labels.map((l) => <PlaceName key={l.t + l.x} {...l} />)}
    <Tram x={632} y={318} />
    <Tram x={340} y={442} />
    <Tram x={75} y={548} />
    <Tram x={131} y={546} />
    <Train x={20} y={506} />
    <Pin x={65} y={298} color="#78909c"><School /></Pin>
    <Pin x={686} y={454} color="#78909c"><School /></Pin>
    <Pin x={752} y={679} color="#e0525a"><Hospital /></Pin>
    <Pin x={688} y={748} color="#e0525a"><Hospital /></Pin>
    <PlaceName t="Nancy" x={399} y={389} kind="city" anchor="middle" />
    <g transform="translate(399 351)">
      <path d="M0-23L20-12V12L0 23-20 12V-12z" fill="#3158cf" stroke="#2747b0" strokeWidth="1.500" />
      <path d="M0 12C-3 5-8 1-8-5a8 8 0 0 1 16 0C8 1 3 5 0 12z" fill="#eef3ff" />
      <circle cy="-5" r="3.500" fill="#3158cf" />
    </g>
    <text x="16" y="762" fontFamily={`Lato, ${mapFont}`} fontSize="30" fontWeight="700" fill="#fff" stroke="#5d5d5d" strokeWidth="4" paintOrder="stroke">
      Google
    </text>
  </MapSvg>
);

const BugIcon = () => (
  <svg width="17" height="18" viewBox="0 0 17 18" fill="none" stroke="#000" strokeWidth="2">
    <rect x="4.500" y="4" width="8" height="11.500" rx="4" />
    <path d="M5 1l2 3M12 1l-2 3M1 6h3M13 6h3M1 10h3M13 10h3M1 14h3.500M12.500 14H16M7 8.200h3M7 11.500h3" strokeWidth="1.600" />
  </svg>
);

const IconSlot = styled.span`
  display: flex;
  justify-content: center;
  width: 32px;
`;

const textFields = [
  { id: "email", label: "Email *", value: "anne.petit@antsroute.com" },
  { id: "first", label: "First Name", value: "Anne" },
  { id: "last", label: "Last Name", value: "Petit" },
  { id: "phone", label: "Phone Number", hint: "Phone Number" },
  { id: "ext", label: "External Id", hint: "External Id" },
];
const selectFields = [
  { id: "vehicle", label: "Default vehicle", value: "v7" },
  { id: "role", label: "Additional role *", value: "No role additional", info: true },
  { id: "calendar", label: "Calendar of non-working days", value: "No calendar", info: true },
];

export default function App() {
  return (
    <Page>
      <Global />
      <Frame>
        <Header>
          <Group>
            <Logo href="#">
              <LogoMark />
              <span><LogoBold>Ants</LogoBold>Route</span>
            </Logo>
            <HeaderLabel htmlFor="warehouse">Warehouse</HeaderLabel>
            <SelectBox $w={215}>
              <Select id="warehouse"><option>Hayange</option></Select>
            </SelectBox>
          </Group>
          <PlanNav aria-label="Planning">
            <NavLink href="#plan"><CalendarIcon />Plan</NavLink>
            <NavLink href="#organize"><GaugeIcon />Organize</NavLink>
            <NavLink href="#monitor"><SignIcon />Monitor</NavLink>
            <NavLink href="#analyze"><AreaIcon />Analyze</NavLink>
          </PlanNav>
          <UserNav aria-label="Account">
            <NavLink href="#customers"><CustomersIcon />Customers</NavLink>
            <NavLink href="#resources" $active><ResourcesIcon />Resources</NavLink>
            <NavLink href="#settings"><GearIcon />Settings</NavLink>
            <IconButton aria-label="Search"><SearchIcon /></IconButton>
            <IconButton aria-label="Notifications"><BellIcon /></IconButton>
            <Avatar>CJ</Avatar>
          </UserNav>
        </Header>
        <Body>
          <Sidebar>
            <Collapse aria-label="Collapse menu">
              <svg width="13" height="21" viewBox="0 0 14 22" fill="none" stroke="#666" strokeWidth="2"><path d="M12 1L2 11l10 10" /></svg>
            </Collapse>
            <SideNav>
              <SideLink href="#vehicles"><IconSlot><CarIcon /></IconSlot>Vehicles</SideLink>
              <SideLink href="#drivers" $active><IconSlot><DriverIcon /></IconSlot>Drivers</SideLink>
              <SideLink href="#schedule"><IconSlot><CalendarIcon /></IconSlot>Assignment schedule</SideLink>
            </SideNav>
          </Sidebar>
          <Main>
            <TitleBar><Title>Update driver: Anne Petit</Title></TitleBar>
            <Scroller>
              <Content>
                <Tabs>
                  <Marked>
                    <Tab $active>General information</Tab>
                    <Outline $inset="-1px -29px -15px -4px"><Step>4</Step></Outline>
                  </Marked>
                  <Tab>Working hours, locations and skills</Tab>
                  <Tab>Absences</Tab>
                </Tabs>
                <Columns>
                  <div>
                    <Card>
                      <CardTitle>General information</CardTitle>
                      <Fields $top={31} $gap={33}>
                        {textFields.map((f) => (
                          <Row key={f.id}>
                            <Label htmlFor={f.id}>{f.label}</Label>
                            <Input id={f.id} defaultValue={f.value} placeholder={f.hint} />
                          </Row>
                        ))}
                      </Fields>
                      <Fields $top={26} $gap={16}>
                        {selectFields.map((f) => (
                          <Row key={f.id}>
                            <Label htmlFor={f.id}>{f.label}{f.info && <> <InfoIcon /></>}</Label>
                            <SelectBox>
                              <Select id={f.id}><option>{f.value}</option></Select>
                            </SelectBox>
                          </Row>
                        ))}
                      </Fields>
                      <Fields $top={33} $gap={0}>
                        <Row $end>
                          <Label htmlFor="color">Color on map *</Label>
                          <Swatch id="color" aria-label="Color on map" />
                        </Row>
                      </Fields>
                    </Card>
                    <Marked>
                      <SkillCard>
                        <Between>
                          <CardTitle>Skills</CardTitle>
                          <ManageLink href="#skills">Manage skills <ExternalIcon /></ManageLink>
                        </Between>
                        <SkillGrid>
                          <Skill><Check type="checkbox" defaultChecked />Delivery</Skill>
                          <Skill><Check type="checkbox" defaultChecked />Installation</Skill>
                        </SkillGrid>
                      </SkillCard>
                      <Outline $inset="0 0 0 -1px"><Step>5</Step></Outline>
                    </Marked>
                    <Actions>
                      <Button $kind="outline">Back</Button>
                      <Marked>
                        <Button $kind="solid">Save</Button>
                        <Outline $inset="-2px -2px -6px"><Step>6</Step></Outline>
                      </Marked>
                    </Actions>
                  </div>
                  <AreaCard>
                    <CardTitle>Working area</CardTitle>
                    <Fields $top={31} $gap={0}>
                      <Row $wide>
                        <Label htmlFor="radius">Distance radius (km) <InfoIcon /></Label>
                        <Input id="radius" placeholder="Not set" />
                      </Row>
                    </Fields>
                    <GeoRow>
                      <span>Geographical area</span>
                      <Button $kind="solid">Edit</Button>
                    </GeoRow>
                    <MapBox>
                      <NancyMap />
                      <Zoom>
                        <ZoomButton aria-label="Zoom in">
                          <svg width="27" height="27" stroke="#666" strokeWidth="4"><path d="M0 13.500h27M13.500 0v27" /></svg>
                        </ZoomButton>
                        <ZoomButton aria-label="Zoom out">
                          <svg width="27" height="4" stroke="#666" strokeWidth="4"><path d="M0 2h27" /></svg>
                        </ZoomButton>
                      </Zoom>
                      <Credits>
                        <span>Données cartographiques ©2026 Google</span>
                        <Distance>200 m</Distance>
                        <Scale />
                        <Terms href="#terms">Conditions d'utilisation</Terms>
                        <BugIcon />
                      </Credits>
                    </MapBox>
                  </AreaCard>
                </Columns>
              </Content>
              <Track><Thumb /></Track>
            </Scroller>
          </Main>
        </Body>
      </Frame>
    </Page>
  );
}
